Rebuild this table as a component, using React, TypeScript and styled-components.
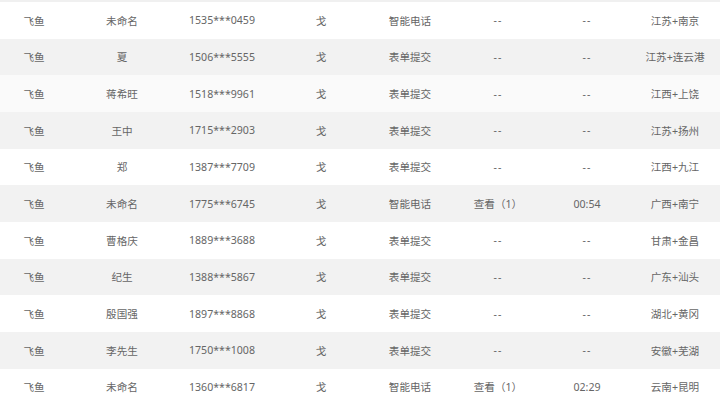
import styled, { createGlobalStyle } from 'styled-components'

const GlobalStyle = createGlobalStyle`
  html, body {
    margin: 0;
    padding: 0;
    background: #ffffff;
  }
  body {
    font-family: 'Noto Sans', 'Noto Sans CJK SC', sans-serif;
  }
`

type Lead = {
  source: string
  name: string
  phone: string
  owner: string
  channel: string
  record: string
  duration: string
  area: string
}

const leads: Lead[] = [
  { source: '飞鱼', name: '未命名', phone: '1535***0459', owner: '戈', channel: '智能电话', record: '--', duration: '--', area: '江苏+南京' },
  { source: '飞鱼', name: '夏', phone: '1506***5555', owner: '戈', channel: '表单提交', record: '--', duration: '--', area: '江苏+连云港' },
  { source: '飞鱼', name: '蒋希旺', phone: '1518***9961', owner: '戈', channel: '表单提交', record: '--', duration: '--', area: '江西+上饶' },
  { source: '飞鱼', name: '王中', phone: '1715***2903', owner: '戈', channel: '表单提交', record: '--', duration: '--', area: '江苏+扬州' },
  { source: '飞鱼', name: '郑', phone: '1387***7709', owner: '戈', channel: '表单提交', record: '--', duration: '--', area: '江西+九江' },
  { source: '飞鱼', name: '未命名', phone: '1775***6745', owner: '戈', channel: '智能电话', record: '查看（1）', duration: '00:54', area: '广西+南宁' },
  { source: '飞鱼', name: '曹格庆', phone: '1889***3688', owner: '戈', channel: '表单提交', record: '--', duration: '--', area: '甘肃+金昌' },
  { source: '飞鱼', name: '纪生', phone: '1388***5867', owner: '戈', channel: '表单提交', record: '--', duration: '--', area: '广东+汕头' },
  { source: '飞鱼', name: '殷国强', phone: '1897***8868', owner: '戈', channel: '表单提交', record: '--', duration: '--', area: '湖北+黄冈' },
  { source: '飞鱼', name: '李先生', phone: '1750***1008', owner: '戈', channel: '表单提交', record: '--', duration: '--', area: '安徽+芜湖' },
  { source: '飞鱼', name: '未命名', phone: '1360***6817', owner: '戈', channel: '智能电话', record: '查看（1）', duration: '02:29', area: '云南+昆明' },
]

// row 3 is the hovered one in the screenshot
const HOVER_ROW = 2

const Table = styled.div`
  display: flex;
  flex-direction: column;
  width: 720px;
  height: 404px;
  overflow: hidden;
  border-top: 2px solid #f0f0f0;
`

const Row = styled.div<{ $tone: 'white' | 'gray' | 'hover' }>`
  display: grid;
  grid-template-columns: 74px 96px 104px 94px 84px 92px 86px 90px;
  flex: 0 0 36.67px;
  align-items: center;
  background: ${({ $tone }) => ($tone === 'gray' ? '#f2f2f2' : $tone === 'hover' ? '#fafafa' : '#ffffff')};
`

const Cell = styled.div<{ $first?: boolean }>`
  text-align: center;
  padding-right: ${({ $first }) => ($first ? '6px' : '0')};
  font-size: 10.6px;
  color: #666666;
  white-space: nowrap;
`

const Dash = styled(Cell)`
  letter-spacing: 1px;
`

export default function App() {
  return (
    <>
      <GlobalStyle />
      <Table>
        {leads.map((l, i) => (
          <Row key={i} $tone={i === HOVER_ROW ? 'hover' : i % 2 === 1 ? 'gray' : 'white'}>
            <Cell $first>{l.source}</Cell>
            <Cell>{l.name}</Cell>
            <Cell>{l.phone}</Cell>
            <Cell>{l.owner}</Cell>
            <Cell>{l.channel}</Cell>
            {l.record === '--' ? <Dash>{l.record}</Dash> : <Cell>{l.record}</Cell>}
            {l.duration === '--' ? <Dash>{l.duration}</Dash> : <Cell>{l.duration}</Cell>}
            <Cell>{l.area}</Cell>
          </Row>
        ))}
      </Table>
    </>
  )
}
